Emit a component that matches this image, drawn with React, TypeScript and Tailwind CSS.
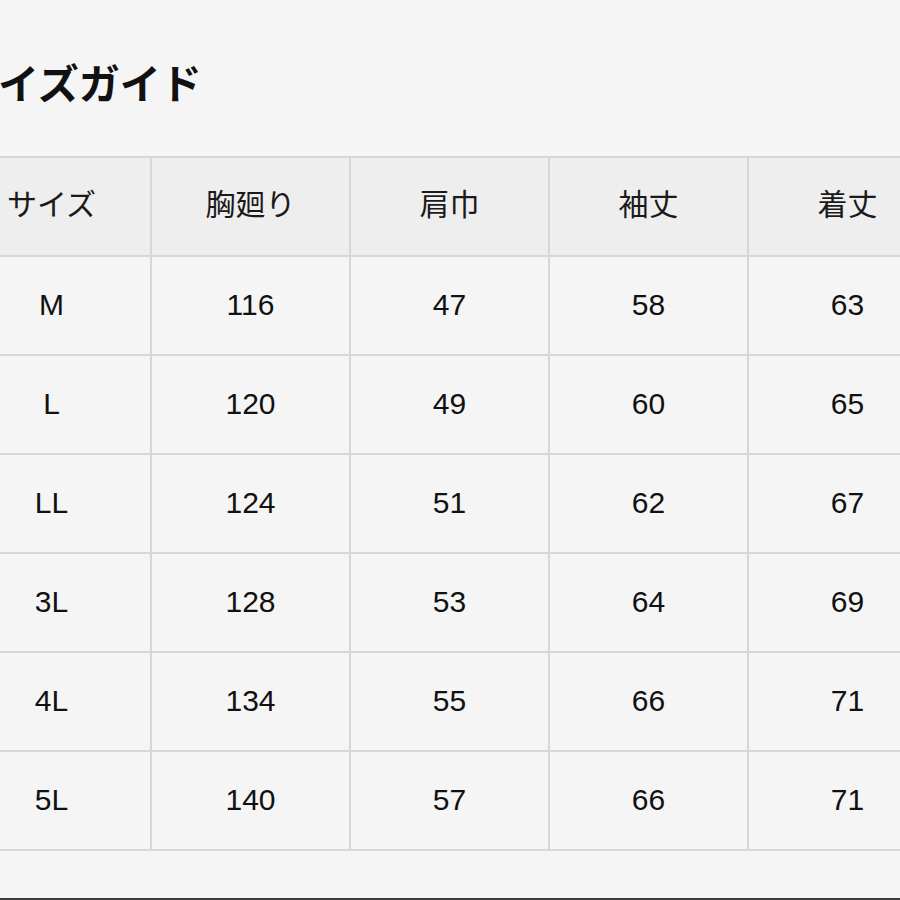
import React from "react";

const headers = ["サイズ", "胸廻り", "肩巾", "袖丈", "着丈"];
const rows = [
  ["M", "116", "47", "58", "63"],
  ["L", "120", "49", "60", "65"],
  ["LL", "124", "51", "62", "67"],
  ["3L", "128", "53", "64", "69"],
  ["4L", "134", "55", "66", "71"],
  ["5L", "140", "57", "66", "71"],
];

export default function App() {
  return (
    <div
      className="relative w-[900px] h-[900px] overflow-hidden bg-[#f5f5f5] flex flex-col"
      style={{ fontFamily: '"Liberation Sans", "Noto Sans CJK JP", sans-serif' }}
    >
      <h1
        className="ml-[-43px] mt-[57px] h-[48px] text-[41px] leading-[48px] font-bold text-[#111] whitespace-nowrap"
        style={{ fontFamily: '"Noto Sans CJK JP", sans-serif' }}
      >
        サイズガイド
      </h1>
      <div className="mt-[51px] ml-[-49px] w-[997px] grid grid-cols-[repeat(5,197px)] gap-[2px] p-[2px] bg-[#d7d7d7]">
        {headers.map((h) => (
          <div
            key={h}
            className="h-[97px] bg-[#eeeeee] flex items-center justify-center text-[30px] text-[#1a1a1a]"
            style={{ fontFamily: '"Noto Sans CJK JP", sans-serif' }}
          >
            <span className="mt-[-8px]">{h}</span>
          </div>
        ))}
        {rows.map((r, i) =>
          r.map((c, j) => (
            <div
              key={`${i}-${j}`}
              className="h-[97px] bg-[#f5f5f5] flex items-center justify-center text-[30px] text-[#111]"
            >
              <span className="mt-[-2px]">{c}</span>
            </div>
          ))
        )}
      </div>
      <div className="absolute left-0 bottom-0 w-full h-[2px] bg-[#3a3a3a]" />
    </div>
  );
}
